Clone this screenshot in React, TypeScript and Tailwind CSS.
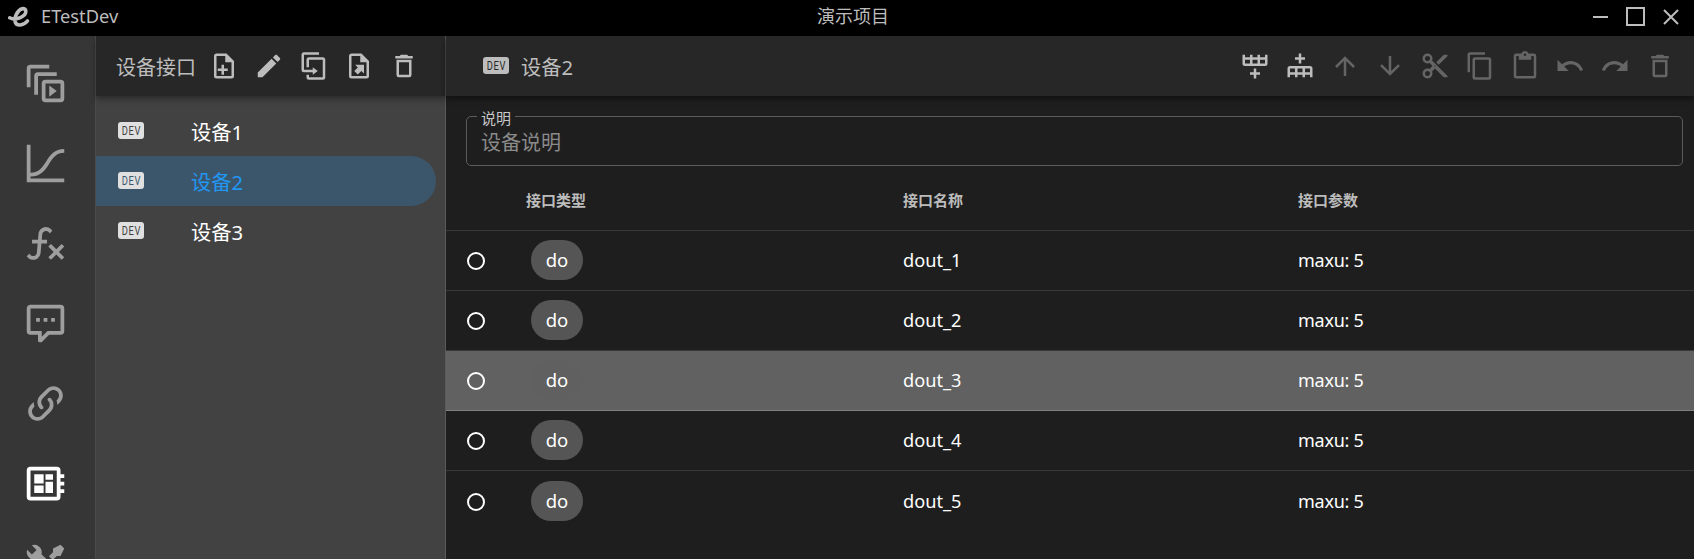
import React from "react";

const ICONS = {
  plays: "M4,2A2,2 0 0,0 2,4V14H4V4H14V2H4M8,6A2,2 0 0,0 6,8V18H8V8H18V6H8M12,10A2,2 0 0,0 10,12V20A2,2 0 0,0 12,22H20A2,2 0 0,0 22,20V12A2,2 0 0,0 20,10H12M12,12H20V20H12V12M14,13V19L18,16L14,13Z",
  curve: "M2,2H4V16.9C8.5,16.9 10.4,14 12.4,10.8C14.4,7.5 16.9,4.2 22,4.2V6.2C17.9,6.2 16,8.8 14.1,11.8C12.1,15.2 9.7,18.9 4,18.9V20H22V22H2V2Z",
  fx: "M12.42,5.29C11.32,5.19 10.35,6 10.25,7.11L10,10H12.82V12H9.82L9.38,17.07C9.18,19.27 7.24,20.9 5.04,20.7C3.79,20.59 2.66,19.9 2,18.83L3.5,17.33C3.83,18.38 4.96,18.97 6,18.63C6.78,18.39 7.33,17.7 7.4,16.89L7.82,12H4.82V10H8L8.27,6.93C8.46,4.73 10.39,3.1 12.6,3.28C13.86,3.39 15,4.09 15.66,5.17L14.16,6.67C13.91,5.9 13.23,5.36 12.42,5.29M22,13.65L20.59,12.24L17.76,15.07L14.93,12.24L13.5,13.65L16.35,16.5L13.5,19.31L14.93,20.72L17.76,17.89L20.59,20.72L22,19.31L19.17,16.5L22,13.65Z",
  comment: "M9,22A1,1 0 0,1 8,21V18H4A2,2 0 0,1 2,16V4C2,2.89 2.9,2 4,2H20A2,2 0 0,1 22,4V16A2,2 0 0,1 20,18H13.9L10.2,21.71C10,21.9 9.75,22 9.5,22H9M10,16V19.08L13.08,16H20V4H4V16H10M17,11H15V9H17V11M13,11H11V9H13V11M9,11H7V9H9V11Z",
  link: "M10.59,13.41C11,13.8 11,14.44 10.59,14.83C10.2,15.22 9.56,15.22 9.17,14.83C7.22,12.88 7.22,9.71 9.17,7.76L12.71,4.22C14.66,2.27 17.83,2.27 19.78,4.22C21.73,6.17 21.73,9.34 19.78,11.29L18.29,12.78C18.3,11.96 18.17,11.14 17.89,10.36L18.36,9.88C19.54,8.71 19.54,6.81 18.36,5.64C17.19,4.46 15.29,4.46 14.12,5.64L10.59,9.17C9.41,10.34 9.41,12.24 10.59,13.41M13.41,9.17C13.8,8.78 14.44,8.78 14.83,9.17C16.78,11.12 16.78,14.29 14.83,16.24L11.29,19.78C9.34,21.73 6.17,21.73 4.22,19.78C2.27,17.83 2.27,14.66 4.22,12.71L5.71,11.22C5.7,12.04 5.83,12.86 6.11,13.65L5.64,14.12C4.46,15.29 4.46,17.19 5.64,18.36C6.81,19.54 8.71,19.54 9.88,18.36L13.41,14.83C14.59,13.66 14.59,11.76 13.41,10.59C13,10.2 13,9.56 13.41,9.17Z",
  board: "M22,9V7H20V5A2,2 0 0,0 18,3H4A2,2 0 0,0 2,5V19A2,2 0 0,0 4,21H18A2,2 0 0,0 20,19V17H22V15H20V13H22V11H20V9H22M18,19H4V5H18V19M6,13H11V17H6V13M12,7H16V10H12V7M6,7H11V12H6V7M12,11H16V17H12V11Z",
  tools: "M21.71 20.29L20.29 21.71A1 1 0 0 1 18.88 21.71L7 9.85A3.81 3.81 0 0 1 6 10A4 4 0 0 1 2.22 4.7L4.76 7.24L5.29 6.71L6.71 5.29L7.24 4.76L4.7 2.22A4 4 0 0 1 10 6A3.81 3.81 0 0 1 9.85 7L21.71 18.88A1 1 0 0 1 21.71 20.29M2.29 18.88A1 1 0 0 0 2.29 20.29L3.71 21.71A1 1 0 0 0 5.12 21.71L10.59 16.25L7.76 13.42M20 2L16 4V6L13.83 8.17L15.83 10.17L18 8H20L22 4Z",
  filePlus: "M6,2C4.89,2 4,2.9 4,4V20A2,2 0 0,0 6,22H18A2,2 0 0,0 20,20V8L14,2H6M6,4H13V9H18V20H6V4M10,11V14H7V16H10V19H12V16H15V14H12V11H10Z",
  pencil: "M20.71,7.04C21.1,6.65 21.1,6 20.71,5.63L18.37,3.29C18,2.9 17.35,2.9 16.96,3.29L15.12,5.12L18.87,8.87M3,17.25V21H6.75L17.81,9.93L14.06,6.18L3,17.25Z",
  duplicate: "M11,17H4A2,2 0 0,1 2,15V3A2,2 0 0,1 4,1H16V3H4V15H11V13L15,16L11,19V17M19,21V7H8V13H6V7A2,2 0 0,1 8,5H19A2,2 0 0,1 21,7V21A2,2 0 0,1 19,23H8A2,2 0 0,1 6,21V19H8V21H19Z",
  fileExport: "M6,2C4.89,2 4,2.9 4,4V20A2,2 0 0,0 6,22H18A2,2 0 0,0 20,20V8L14,2H6M6,4H13V9H18V20H6V4M8.93,11H16V18.07L13.88,15.95L11.05,18.78L8.22,15.95L11.05,13.12Z",
  trash: "M6,19A2,2 0 0,0 8,21H16A2,2 0 0,0 18,19V7H6V19M8,9H16V19H8V9M15.5,4L14.5,3H9.5L8.5,4H5V6H19V4H15.5Z",
  rowAfter: "M22,10A2,2 0 0,1 20,12H4A2,2 0 0,1 2,10V3H4V5H8V3H10V5H14V3H16V5H20V3H22V10M4,10H8V7H4V10M10,10H14V7H10V10M20,10V7H16V10H20M11,14H13V17H16V19H13V22H11V19H8V17H11V14Z",
  rowBefore: "M22,14A2,2 0 0,0 20,12H4A2,2 0 0,0 2,14V21H4V19H8V21H10V19H14V21H16V19H20V21H22V14M4,14H8V17H4V14M10,14H14V17H10V14M20,14V17H16V14H20M11,10H13V7H16V5H13V2H11V5H8V7H11V10Z",
  up: "M13,20H11V8L5.5,13.5L4.08,12.08L12,4.16L19.92,12.08L18.5,13.5L13,8V20Z",
  down: "M11,4H13V16L18.5,10.5L19.92,11.92L12,19.84L4.08,11.92L5.5,10.5L11,16V4Z",
  cut: "M19,3L13,9L15,11L22,4V3M12,12.5A0.5,0.5 0 0,1 11.5,12A0.5,0.5 0 0,1 12,11.5A0.5,0.5 0 0,1 12.5,12A0.5,0.5 0 0,1 12,12.5M6,20A2,2 0 0,1 4,18C4,16.89 4.9,16 6,16A2,2 0 0,1 8,18C8,19.11 7.1,20 6,20M6,8A2,2 0 0,1 4,6C4,4.89 4.9,4 6,4A2,2 0 0,1 8,6C8,7.11 7.1,8 6,8M9.64,7.64C9.87,7.14 10,6.59 10,6A4,4 0 0,0 6,2A4,4 0 0,0 2,6A4,4 0 0,0 6,10C6.59,10 7.14,9.87 7.64,9.64L10,12L7.64,14.36C7.14,14.13 6.59,14 6,14A4,4 0 0,0 2,18A4,4 0 0,0 6,22A4,4 0 0,0 10,18C10,17.41 9.87,16.86 9.64,16.36L12,14L19,21H22V20L9.64,7.64Z",
  copy: "M19,21H8V7H19M19,5H8A2,2 0 0,0 6,7V21A2,2 0 0,0 8,23H19A2,2 0 0,0 21,21V7A2,2 0 0,0 19,5M16,1H4A2,2 0 0,0 2,3V17H4V3H16V1Z",
  paste: "M19,20H5V4H7V7H17V4H19M12,2A1,1 0 0,1 13,3A1,1 0 0,1 12,4A1,1 0 0,1 11,3A1,1 0 0,1 12,2M19,2H14.82C14.4,0.84 13.3,0 12,0C10.7,0 9.6,0.84 9.18,2H5A2,2 0 0,0 3,4V20A2,2 0 0,0 5,22H19A2,2 0 0,0 21,20V4A2,2 0 0,0 19,2Z",
  undo: "M12.5,8C9.85,8 7.45,9 5.6,10.6L2,7V16H11L7.38,12.38C8.77,11.22 10.54,10.5 12.5,10.5C16.04,10.5 19.05,12.81 20.1,16L22.47,15.22C21.08,11.03 17.15,8 12.5,8Z",
  redo: "M18.4,10.6C16.55,9 14.15,8 11.5,8C6.85,8 2.92,11.03 1.54,15.22L3.9,16C4.95,12.81 7.95,10.5 11.5,10.5C13.45,10.5 15.23,11.22 16.62,12.38L13,16H22V7L18.4,10.6Z",
};
type IconName = keyof typeof ICONS;

function Icon({ name, className = "size-[30px]" }: { name: IconName; className?: string }) {
  return (
    <svg viewBox="0 0 24 24" className={`shrink-0 ${className}`} fill="currentColor" fillRule="evenodd">
      <path d={ICONS[name]} />
    </svg>
  );
}

function DevBadge({ className }: { className: string }) {
  return (
    <span className={`-mt-px flex h-[17px] w-[26px] shrink-0 items-center justify-center rounded-[3px] ${className}`}>
      <span className="scale-x-[.72] pl-px font-['Roboto',sans-serif] text-[13px] leading-none tracking-[1px]">DEV</span>
    </span>
  );
}

const NAV: IconName[] = ["plays", "curve", "fx", "comment", "link", "board", "tools"];
const PANEL_TOOLS: IconName[] = ["filePlus", "pencil", "duplicate", "fileExport", "trash"];
const EDIT_TOOLS: IconName[] = ["rowAfter", "rowBefore", "up", "down", "cut", "copy", "paste", "undo", "redo", "trash"];
const DEVICES = ["设备1", "设备2", "设备3"];
const ROWS = ["dout_1", "dout_2", "dout_3", "dout_4", "dout_5"];
const GRID = "grid grid-cols-[80px_377px_395px_1fr]";

export default function App() {
  return (
    <div className="flex h-[559px] w-[1694px] flex-col overflow-hidden bg-[#1e1e1e] font-['Noto_Sans','Noto_Sans_CJK_SC',sans-serif] text-white">
      <header className="grid h-9 shrink-0 grid-cols-3 items-center bg-black text-[#bdbdbd]">
        <div className="flex items-center pl-2">
          <svg viewBox="0 0 22 22" className="-mt-[3px] size-[22px]" fill="none" stroke="currentColor" strokeWidth="3.6" strokeLinecap="round">
            <path d="M1.8 11.8C6 14.5 17.8 11.5 17.8 5.6C17.8 2 13.6 1.6 10.8 4.8C7.5 8.6 6.5 12.5 7.2 15.8C8.2 20.4 15.4 20 19.4 15" />
          </svg>
          <span className="ml-[11px] -mt-[3px] text-[18.3px] leading-none">ETestDev</span>
        </div>
        <div className="-mt-[4px] pl-[12px] text-center text-[18px] leading-none">演示项目</div>
        <div className="-mt-[4px] flex justify-end pr-[14px]">
          <svg viewBox="0 0 88 20" className="h-5 w-[88px]" fill="none" stroke="currentColor" strokeWidth="2">
            <path d="M1 11H16M35 2H52V19H35Z" />
            <path d="M72 4L86 18M86 4L72 18" />
          </svg>
        </div>
      </header>

      <div className="flex min-h-0 flex-1">
        <nav className="flex w-24 shrink-0 flex-col overflow-hidden border-r border-[#4a4a4a] bg-[#363636] pt-[7px] pl-[23.3px]">
          {NAV.map((n) => (
            <div key={n} className="flex h-20 shrink-0 items-center">
              <Icon name={n} className={n === "board" ? "size-[45px] text-white" : "size-[45px] text-[#9e9e9e]"} />
            </div>
          ))}
        </nav>

        <aside className="flex w-[350px] shrink-0 flex-col border-r border-[#5a5a5a] bg-[#424242]">
          <div className="flex h-[60px] shrink-0 items-center bg-[#272727] pl-5 text-[#bdbdbd] shadow-[0_3px_6px_rgba(0,0,0,0.35)]">
            <span className="w-[92.5px] pt-[3px] text-[20px] leading-none">设备接口</span>
            <div className="flex gap-[15px]">
              {PANEL_TOOLS.map((n) => (
                <Icon key={n} name={n} />
              ))}
            </div>
          </div>
          <div className="pt-[10px] pr-[9px]">
            {DEVICES.map((d, i) => (
              <div
                key={d}
                className={`flex h-[50px] items-center rounded-r-full pl-[22px] ${i === 1 ? "bg-[#3b566b] text-[#2196f3]" : ""}`}
              >
                <DevBadge className={i === 1 ? "bg-[#e0e0e0] text-[#3b566b]" : "bg-[#e0e0e0] text-[#424242]"} />
                <span className="ml-[47px] pt-[2px] text-[20.3px] leading-none">{d}</span>
              </div>
            ))}
          </div>
        </aside>

        <main className="flex min-w-0 flex-1 flex-col">
          <div className="flex h-[60px] shrink-0 items-center justify-between bg-[#272727] pr-[19px] pl-[37px] text-[#bdbdbd] shadow-[0_3px_6px_rgba(0,0,0,0.45)]">
            <div className="flex items-center">
              <DevBadge className="bg-[#bdbdbd] text-[#272727]" />
              <span className="ml-3 pt-[2px] text-[20.3px] leading-none">设备2</span>
            </div>
            <div className="flex gap-[15px]">
              {EDIT_TOOLS.map((n, i) => (
                <Icon key={n} name={n} className={i < 2 ? "size-[30px]" : "size-[30px] text-[#656565]"} />
              ))}
            </div>
          </div>

          <fieldset className="mt-[11px] mr-[11px] ml-5 h-[59px] shrink-0 rounded-[5px] border border-[#5c5c5c] pl-[10px]">
            <legend className="h-[18px] px-1 pt-[2px] text-[15px] leading-[18px] text-[#c7c7c7]">说明</legend>
            <div className="pt-[2px] pl-1 text-[20px] leading-[32px] text-[#8a8a8a]">设备说明</div>
          </fieldset>

          <div className={`${GRID} h-[65px] shrink-0 items-center border-b border-[#383838] pt-[5px] text-[15px] font-bold text-[#bcbcbc]`}>
            <span />
            <span>接口类型</span>
            <span>接口名称</span>
            <span>接口参数</span>
          </div>
          {ROWS.map((r, i) => (
            <div
              key={r}
              className={`${GRID} shrink-0 items-center text-[18px] ${
                i === 2 ? "h-[60px] border-b border-[#808080] bg-[#616161]" : i === 4 ? "h-[61px]" : "h-[60px] border-b border-[#383838]"
              }`}
            >
              <span className="mt-px ml-[21px] size-[18px] rounded-full border-2 border-white" />
              <span
                className={`-mt-px ml-[5px] flex h-10 w-[52px] items-center justify-center rounded-full text-[18.5px] ${i === 2 ? "bg-[#606060]" : "bg-[#555555]"}`}
              >
                do
              </span>
              <span className="text-[18.2px]">{r}</span>
              <span className="tracking-[-0.25px]">maxu: 5</span>
            </div>
          ))}
        </main>
      </div>
    </div>
  );
}
